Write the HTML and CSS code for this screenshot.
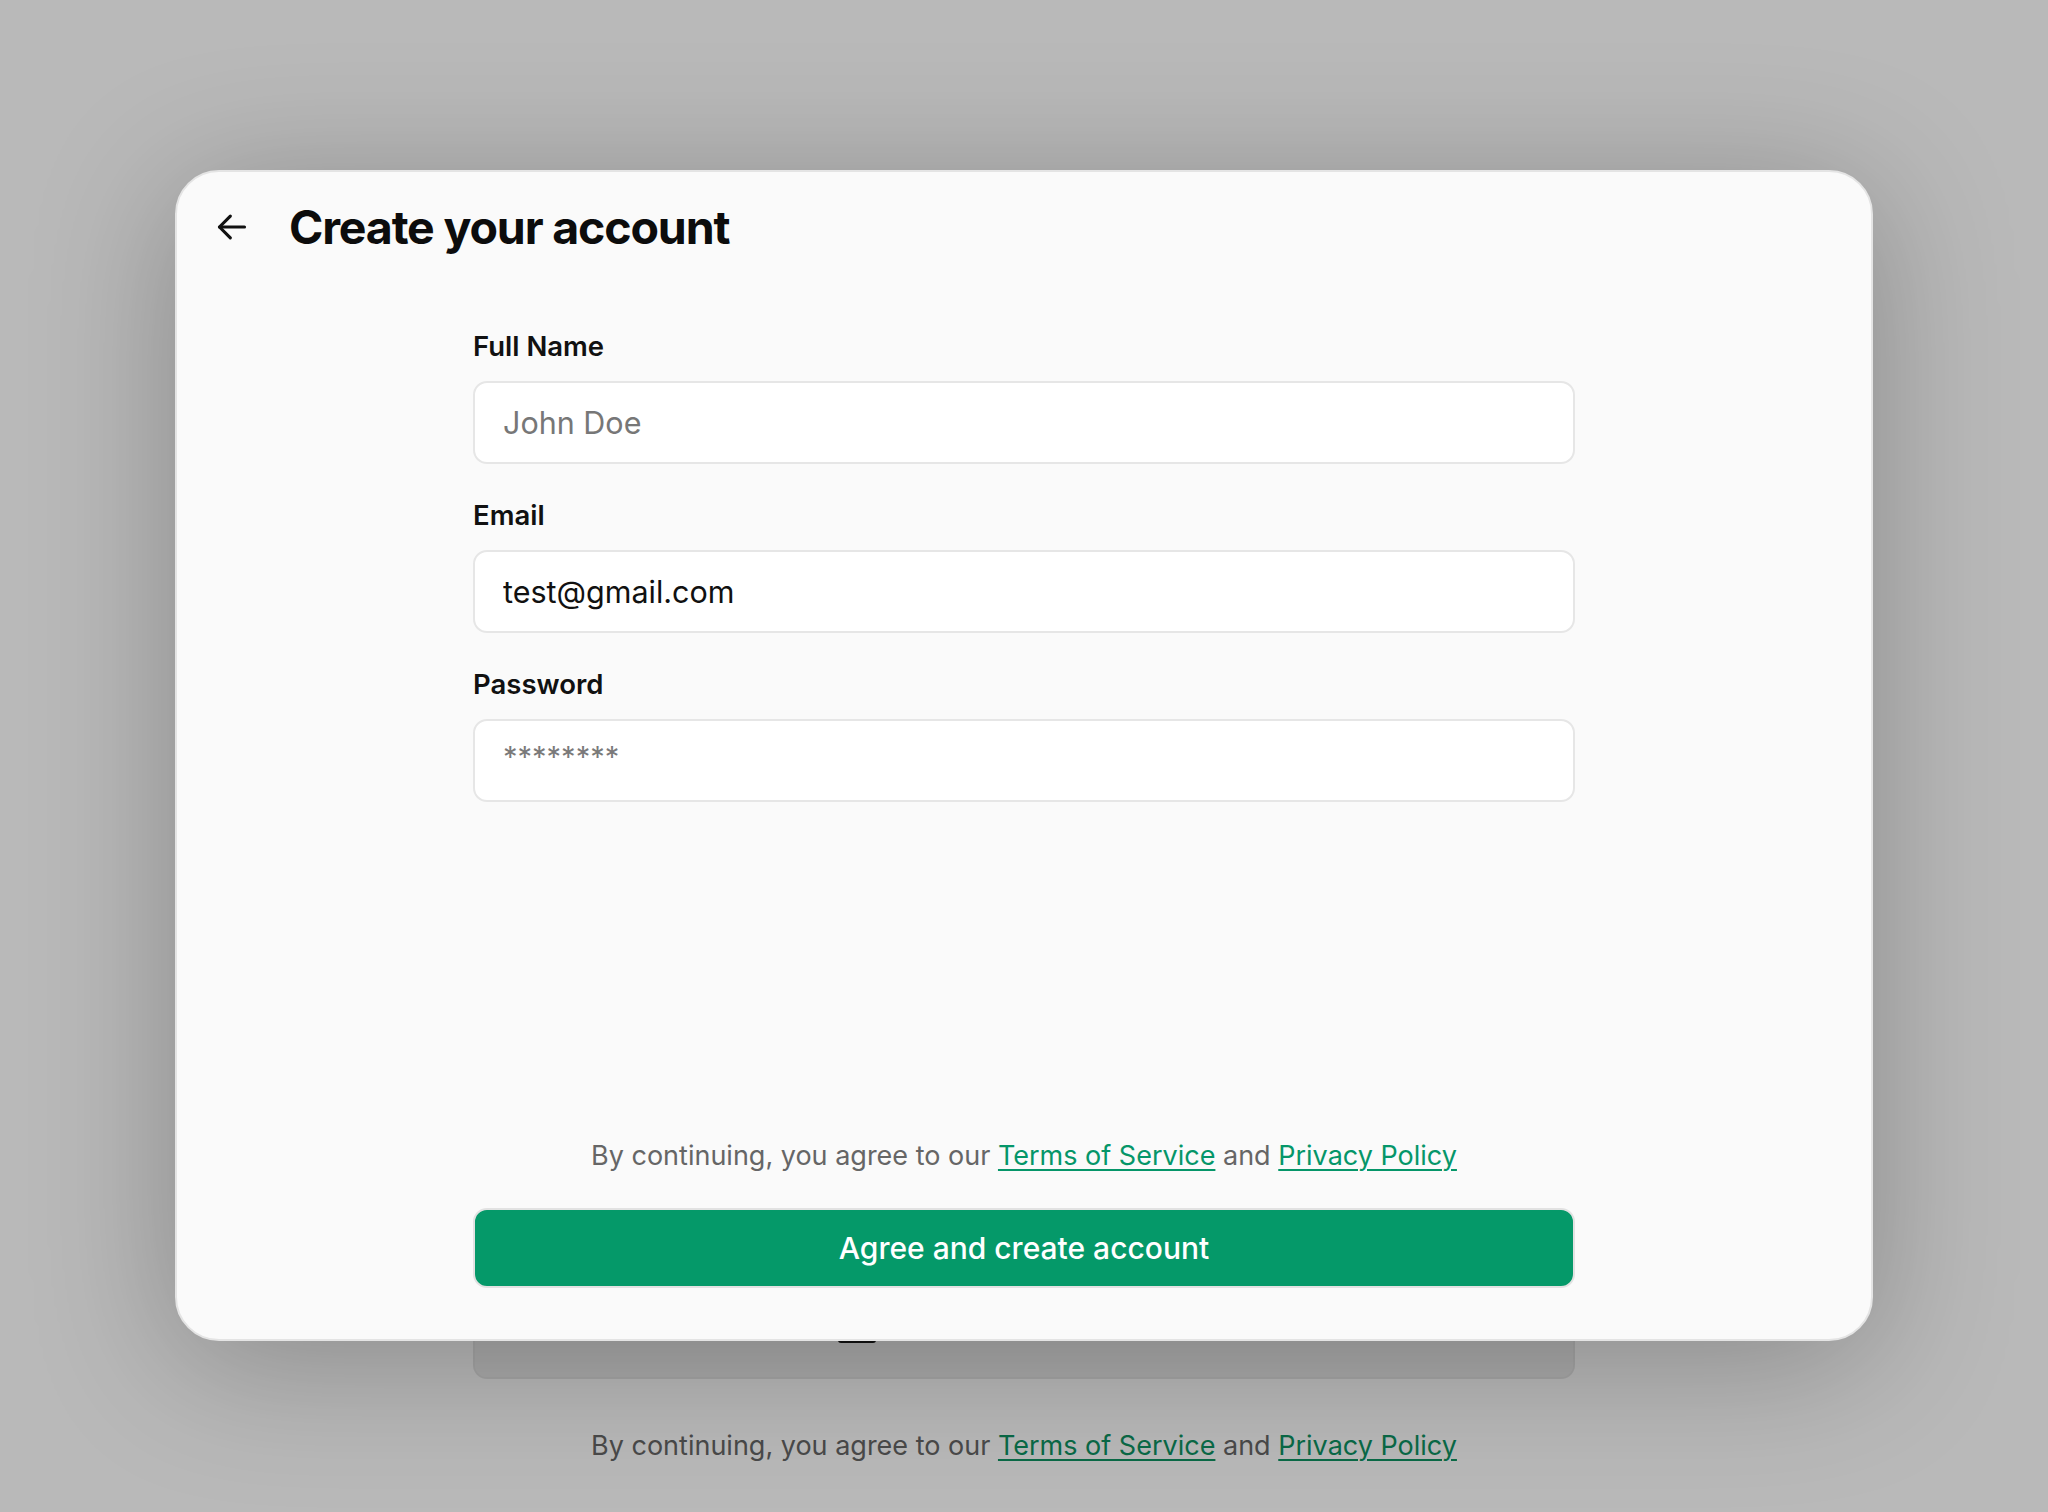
FILE: index.html
```html
<!DOCTYPE html>
<html lang="en">
<head>
<meta charset="utf-8">
<title>Create your account</title>
<link rel="stylesheet" href="styles.css">
</head>
<body>
  <div class="bg-page">
    <div class="bg-button"><span class="bg-mark"></span></div>
    <p class="bg-terms">By continuing, you agree to our <a href="#">Terms of Service</a> and <a href="#">Privacy Policy</a></p>
  </div>

  <div class="modal">
    <header class="modal-header">
      <button class="back" aria-label="Back">
        <svg width="40" height="40" viewBox="0 0 24 24" fill="none" stroke="currentColor" stroke-width="1.9" stroke-linecap="round" stroke-linejoin="round"><path d="M19.5 12H4.5"/><path d="M11 5.5L4.5 12l6.5 6.5"/></svg>
      </button>
      <h1 class="title">Create your account</h1>
    </header>

    <form class="form">
      <label class="field">
        <span class="label">Full Name</span>
        <input class="input" type="text" placeholder="John Doe">
      </label>
      <label class="field">
        <span class="label">Email</span>
        <input class="input" type="email" value="test@gmail.com">
      </label>
      <label class="field">
        <span class="label">Password</span>
        <input class="input input-pass" type="text" placeholder="********">
      </label>
    </form>

    <footer class="modal-footer">
      <p class="terms">By continuing, you agree to our <a href="#">Terms of Service</a> and <a href="#">Privacy Policy</a></p>
      <button class="primary" type="button">Agree and create account</button>
    </footer>
  </div>
</body>
</html>
```

FILE: styles.css
```css
* { box-sizing: border-box; }

html, body {
  margin: 0;
  padding: 0;
}

body {
  width: 2048px;
  height: 1512px;
  overflow: hidden;
  position: relative;
  background: #b9b9b9;
  font-family: Inter, "Liberation Sans", sans-serif;
  color: #111;
}

/* underlying (dimmed) page */
.bg-page {
  width: 1102px;
  margin: 0 auto;
  padding-top: 1299px;
  display: flex;
  flex-direction: column;
  align-items: stretch;
}

.bg-button {
  height: 80px;
  border-radius: 14px;
  background: rgba(0, 0, 0, 0.07);
  border: 2px solid rgba(0, 0, 0, 0.03);
  position: relative;
}

.bg-mark {
  position: absolute;
  left: 363px;
  top: 38px;
  width: 38px;
  height: 4px;
  border-radius: 0 0 3px 3px;
  background: #111;
}

.bg-terms {
  margin: 49px 0 0;
  text-align: center;
  font-size: 27px;
  line-height: 36px;
  color: #4a4a4a;
}

.bg-terms a {
  color: #0a6a47;
  text-decoration: underline;
  text-underline-offset: 4px;
  text-decoration-thickness: 2px;
}

/* modal */
.modal {
  position: absolute;
  left: 175px;
  top: 170px;
  width: 1698px;
  height: 1171px;
  background: #fafafa;
  border: 2px solid #e4e4e4;
  border-radius: 44px;
  box-shadow: 0 20px 140px rgba(0, 0, 0, 0.26);
  display: flex;
  flex-direction: column;
  padding: 27px 0 51px;
}

.modal-header {
  display: flex;
  align-items: center;
  height: 56px;
  padding-left: 33px;
}

.back {
  width: 44px;
  height: 44px;
  padding: 0;
  border: 0;
  background: none;
  color: #111;
  display: flex;
  align-items: center;
  justify-content: center;
}

.title {
  margin: 0 0 0 35px;
  font-size: 46.5px;
  line-height: 56px;
  font-weight: 700;
  letter-spacing: -0.025em;
  color: #0c0c0c;
}

.form {
  width: 1102px;
  margin: 74px auto 0;
  display: flex;
  flex-direction: column;
  gap: 34px;
}

.field {
  display: flex;
  flex-direction: column;
  gap: 18px;
}

.label {
  font-size: 27.5px;
  line-height: 34px;
  font-weight: 600;
  color: #111;
}

.input {
  height: 83px;
  width: 100%;
  border: 2px solid #e6e6e6;
  border-radius: 14px;
  background: #fff;
  padding: 0 28px;
  font-family: inherit;
  font-size: 30.5px;
  color: #111;
  outline: none;
}

.input::placeholder {
  color: #777;
}

.input-pass {
  padding-bottom: 8px;
  font-size: 29px;
}

.input-pass::placeholder {
  color: #7a7a7a;
}

.modal-footer {
  margin-top: auto;
  width: 1102px;
  margin-left: auto;
  margin-right: auto;
  display: flex;
  flex-direction: column;
  gap: 34px;
}

.terms {
  margin: 0;
  text-align: center;
  font-size: 27px;
  line-height: 36px;
  color: #666;
}

.terms a {
  color: #059669;
  text-decoration: underline;
  text-underline-offset: 4px;
  text-decoration-thickness: 2px;
}

.primary {
  height: 80px;
  width: 100%;
  border: 2px solid #e2e2e2;
  border-radius: 14px;
  background: #059969;
  color: #fff;
  font-family: inherit;
  font-size: 30px;
  font-weight: 500;
  cursor: pointer;
}
```
